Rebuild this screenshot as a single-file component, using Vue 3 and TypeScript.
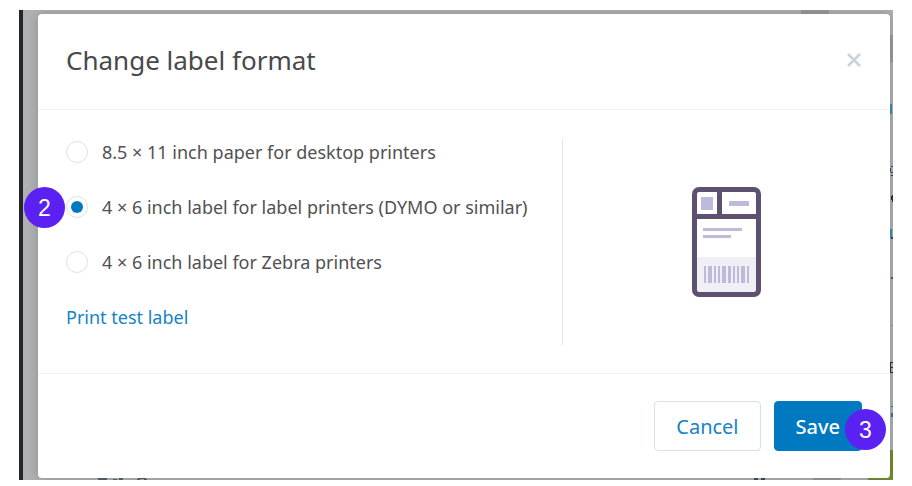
<script setup lang="ts">
import { ref } from 'vue'

interface LabelFormat {
  id: string
  label: string
  step?: number
}

const formats: LabelFormat[] = [
  { id: 'paper', label: '8.5 × 11 inch paper for desktop printers' },
  { id: 'dymo', label: '4 × 6 inch label for label printers (DYMO or similar)', step: 2 },
  { id: 'zebra', label: '4 × 6 inch label for Zebra printers' },
]

const selected = ref('dymo')

// Barcode bars as [x, width]
const bars: number[][] = [
  [12, 2], [16, 4], [22, 2], [26, 2], [30, 4], [36, 3], [41, 2], [45, 2], [49, 4], [55, 2],
]
</script>

<template>
  <main class="page">
    <div class="backdrop">
      <svg class="edge edge-top" width="120" height="4" aria-hidden="true">
        <path fill="#999a9b" d="M40 0h28v4h-28z" />
      </svg>
      <svg class="edge edge-right" width="4" height="470" aria-hidden="true">
        <path fill="#999d9f" d="M1 25h3v27h-3z" />
        <path fill="#3f8fb5" d="M1 94h2v10h-2zM1 219h2v9h-2z" />
        <path fill="#2b4d69" d="M2 156h2v1h-2zM1 158h1v4h-1zM2 162h2v1h-2zM2 165h2v1h-2zM2 227h2v2h-2z" />
        <path fill="#402648" d="M3 185h1v7h-1zM2 186h1v4h-1z" />
        <path fill="#8b4a24" d="M2 267h2v2h-2z" />
        <path fill="#3f2730" d="M1 352h1v11h-1zM2 352h2v1h-2zM2 357h2v1h-2zM2 362h2v1h-2z" />
        <path fill="#999d9f" d="M1 315h3v1h-3z" />
        <path fill="#426da4" d="M2 396h2v1h-2zM2 403h2v4h-2z" />
        <path fill="#718f32" d="M0 440h4v30h-4z" />
      </svg>
      <svg class="edge edge-bottom-left" width="160" height="2" aria-hidden="true">
        <path fill="#53646e" d="M79 0h9v2h-9zM94 1h4v1h-4zM100 0h4v2h-4zM119 0h8v1h-8zM118 1h3v1h-3zM125 1h3v1h-3z" />
      </svg>
      <svg class="edge edge-bottom-right" width="160" height="2" aria-hidden="true">
        <path fill="#3e4b5a" d="M21 0h4v2h-4zM28 0h4v2h-4z" />
        <path fill="#999a9b" d="M80 0h28v2h-28z" />
        <path fill="#718f32" d="M135 0h25v2h-25z" />
      </svg>

      <section class="modal" role="dialog" aria-labelledby="dialog-title">
        <header class="header">
          <h1 id="dialog-title" class="title">Change label format</h1>
          <button class="close" type="button" aria-label="Close">
            <svg width="16" height="16" viewBox="0 0 16 16" aria-hidden="true">
              <path d="M2 2l12 12M14 2L2 14" fill="none" stroke="#c8d3de" stroke-width="2.6" />
            </svg>
          </button>
        </header>

        <div class="body">
          <div class="options">
            <div v-for="format in formats" :key="format.id" class="option">
              <input :id="format.id" v-model="selected" class="radio" type="radio" name="format" :value="format.id" />
              <label :for="format.id">{{ format.label }}</label>
              <span v-if="format.step" class="badge badge-option">{{ format.step }}</span>
            </div>
            <a class="test-link" href="#test-label">Print test label</a>
          </div>

          <div class="preview">
            <svg width="69" height="110" viewBox="0 0 69 110" aria-hidden="true">
              <rect x="2.5" y="2.5" width="64" height="105" rx="4.5" fill="#fff" />
              <path fill="#f0eff5" d="M5 70h59v35H5z" />
              <rect x="2.5" y="2.5" width="64" height="105" rx="4.5" fill="none" stroke="#5d5070" stroke-width="5" />
              <path d="M3 29.5h63M27.5 3v26" fill="none" stroke="#5d5070" stroke-width="5" />
              <path fill="#bdbbd9" d="M9 10h12v13H9zM37 14h20v5H37zM11 41h39v3H11zM11 48h28v3H11z" />
              <rect v-for="bar in bars" :key="bar[0]" :x="bar[0]" y="79" :width="bar[1]" height="17" fill="#bdbbd9" />
            </svg>
          </div>
        </div>

        <footer class="footer">
          <button class="button cancel" type="button">Cancel</button>
          <div class="save-wrap">
            <button class="button save" type="button">Save</button>
            <span class="badge badge-save">3</span>
          </div>
        </footer>
      </section>
    </div>
  </main>
</template>

<style>
body {
  background: #fff;
}
</style>

<style scoped>
.page {
  box-sizing: border-box;
  padding: 10px 19px 6px;
  color: #505153;
  font-family: "Noto Sans", "Open Sans", sans-serif;
  font-size: 18px;
  line-height: 28px;
}

.backdrop {
  position: relative;
  padding: 4px 3px 2px 15px;
  border-left: 4px solid #23262e;
  background: #b0b1b2;
}

.edge {
  position: absolute;
  display: block;
}

.edge-top {
  top: 0;
  right: 12px;
}

.edge-right {
  top: 0;
  right: 0;
}

.edge-bottom-left {
  bottom: 0;
  left: -4px;
}

.edge-bottom-right {
  right: 0;
  bottom: 0;
}

.modal {
  position: relative;
  border-radius: 4px;
  background: #fff;
  box-shadow: 0 0 12px rgba(0, 0, 0, 0.2);
  clip-path: inset(-4px -3px -2px -15px);
}

.header {
  display: flex;
  align-items: center;
  justify-content: space-between;
  box-sizing: border-box;
  min-height: 96px;
  padding: 0 28px 4px;
  border-bottom: 1px solid #eef0f1;
}

.title {
  margin: 0;
  color: #48494b;
  font-size: 26px;
  font-weight: 400;
  line-height: 36px;
}

.close {
  display: flex;
  padding: 0;
  border: 0;
  background: none;
  cursor: pointer;
}

.body {
  display: grid;
  grid-template-columns: minmax(0, 1fr) 328px;
  padding: 28px 0 28px 28px;
}

.options {
  display: flex;
  flex-direction: column;
  align-items: flex-start;
  gap: 27px;
  padding-bottom: 14px;
}

.option {
  position: relative;
  display: flex;
  align-items: center;
  gap: 14px;
}

.radio {
  display: grid;
  place-items: center;
  box-sizing: border-box;
  width: 22px;
  height: 22px;
  margin: 0;
  border: 1px solid #dbe2e8;
  border-radius: 50%;
  background: #fff;
  appearance: none;
}

.radio:checked::before {
  width: 12px;
  height: 12px;
  border-radius: 50%;
  background: #0079c1;
  content: "";
}

.test-link {
  color: #1583c5;
  text-decoration: none;
}

.preview {
  display: flex;
  align-items: center;
  justify-content: center;
  border-left: 1px solid #e3e9ed;
}

.footer {
  display: flex;
  justify-content: flex-end;
  gap: 13px;
  padding: 27px 28px;
  border-top: 1px solid #eef0f1;
}

.button {
  box-sizing: border-box;
  height: 50px;
  padding: 2px 21px 0;
  border: 1px solid #d9e1e8;
  border-radius: 4px;
  background: #fff;
  color: #1583c5;
  font-family: inherit;
  font-size: 20px;
  line-height: 28px;
  cursor: pointer;
}

.save {
  border-color: #0079c1;
  background: #0079c1;
  color: #fff;
  font-weight: 500;
}

.save-wrap {
  position: relative;
}

.badge {
  position: absolute;
  display: grid;
  place-items: center;
  width: 41px;
  height: 41px;
  border-radius: 50%;
  background: #5b21f3;
  color: #fff;
  font-family: "Liberation Sans", sans-serif;
  font-size: 23px;
}

.badge-option {
  top: -6px;
  left: -42px;
}

.badge-save {
  right: -24px;
  bottom: 1px;
}
</style>
